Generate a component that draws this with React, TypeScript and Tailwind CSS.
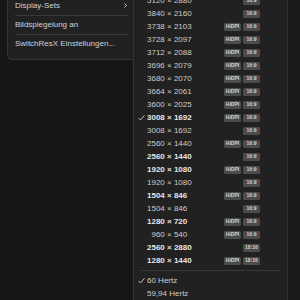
import React from "react";

type Row = { res: string; bold?: boolean; hidpi?: boolean; ratio: string; check?: boolean };

const rows: Row[] = [
  { res: "5120 × 2880", ratio: "16:9" },
  { res: "3840 × 2160", ratio: "16:9" },
  { res: "3738 × 2103", hidpi: true, ratio: "16:9" },
  { res: "3728 × 2097", hidpi: true, ratio: "16:9" },
  { res: "3712 × 2088", hidpi: true, ratio: "16:9" },
  { res: "3696 × 2079", hidpi: true, ratio: "16:9" },
  { res: "3680 × 2070", hidpi: true, ratio: "16:9" },
  { res: "3664 × 2061", hidpi: true, ratio: "16:9" },
  { res: "3600 × 2025", hidpi: true, ratio: "16:9" },
  { res: "3008 × 1692", bold: true, hidpi: true, ratio: "16:9", check: true },
  { res: "3008 × 1692", ratio: "16:9" },
  { res: "2560 × 1440", hidpi: true, ratio: "16:9" },
  { res: "2560 × 1440", bold: true, ratio: "16:9" },
  { res: "1920 × 1080", bold: true, hidpi: true, ratio: "16:9" },
  { res: "1920 × 1080", ratio: "16:9" },
  { res: "1504 × 846", bold: true, hidpi: true, ratio: "16:9" },
  { res: "1504 × 846", ratio: "16:9" },
  { res: "1280 × 720", bold: true, hidpi: true, ratio: "16:9" },
  { res: "\u2007960 × 540", hidpi: true, ratio: "16:9" },
  { res: "2560 × 2880", bold: true, ratio: "18:16" },
  { res: "1280 × 1440", bold: true, hidpi: true, ratio: "18:16" },
];

function Badge({ text }: { text: string }) {
  return (
    <span className="w-[17px] h-[8px] rounded-[1.5px] bg-[#4c4c4c] text-[#d2d2d2] flex items-center justify-center text-[5px] leading-none font-bold">
      {text}
    </span>
  );
}

function Check() {
  return (
    <svg width="7" height="6" viewBox="0 0 7 6" className="block">
      <path d="M0.8 3.2 L2.6 5 L6.2 0.6" stroke="#d0d0d0" strokeWidth="0.9" fill="none" strokeLinecap="round" strokeLinejoin="round" />
    </svg>
  );
}

export default function App() {
  return (
    <div
      className="w-[300px] h-[300px] overflow-hidden bg-[#161616] flex items-start"
      style={{ fontFamily: '"Liberation Sans", Arial, sans-serif' }}
    >
      <div className="w-[7px] shrink-0" />
      {/* left menu */}
      <div className="w-[126px] shrink-0 bg-[#212121] border-l border-b border-[#333333] rounded-bl-[6px] flex flex-col -mt-[1px] pb-[9px] text-[8px] text-[#d2d2d2]">
        <div className="h-[13px] flex items-center pl-[7px] pr-[6px] justify-between">
          <span>Display-Sets</span>
          <svg width="3" height="5" viewBox="0 0 3 5">
            <path d="M0.5 0.5 L2.5 2.5 L0.5 4.5" stroke="#cfcfcf" strokeWidth="0.9" fill="none" />
          </svg>
        </div>
        <div className="h-[6px] flex items-center pl-[7px] pr-[5px]">
          <div className="h-px w-full bg-[#3a3a3a]" />
        </div>
        <div className="h-[13px] flex items-center pl-[7px]">Bildspiegelung an</div>
        <div className="h-[6px] flex items-center pl-[7px] pr-[5px]">
          <div className="h-px w-full bg-[#3a3a3a]" />
        </div>
        <div className="h-[13px] flex items-center pl-[7px]">SwitchResX Einstellungen...</div>
      </div>
      {/* right panel */}
      <div className="w-[155px] shrink-0 h-[300px] bg-[#212121] border-l border-r border-[#343434] flex flex-col">
        <div className="flex flex-col -mt-[6px] text-[8px]">
          {rows.map((r, i) => (
            <div key={i} className="h-[13px] flex items-center pl-[4px] pr-[27px]">
              <div className="w-[9px] flex items-center">{r.check ? <Check /> : null}</div>
              <span className={`flex-1 whitespace-pre ${r.bold ? "font-bold text-[#e6e6e6]" : "text-[#cccccc]"}`}>{r.res}</span>
              <div className="flex gap-[2px]">
                {r.hidpi ? <Badge text="HiDPI" /> : <span className="w-[17px]" />}
                <Badge text={r.ratio} />
              </div>
            </div>
          ))}
          <div className="h-[7px] flex items-center pl-[7px] pr-[7px]">
            <div className="h-px w-full bg-[#3a3a3a]" />
          </div>
          <div className="h-[13px] flex items-center pl-[4px] text-[#d0d0d0]">
            <div className="w-[9px] flex items-center"><Check /></div>
            <span>60 Hertz</span>
          </div>
          <div className="h-[13px] flex items-center pl-[4px] text-[#cccccc]">
            <div className="w-[9px]" />
            <span>59,94 Hertz</span>
          </div>
        </div>
      </div>
      <div className="flex-1 h-[300px] bg-[#1b1b1b]" />
    </div>
  );
}
